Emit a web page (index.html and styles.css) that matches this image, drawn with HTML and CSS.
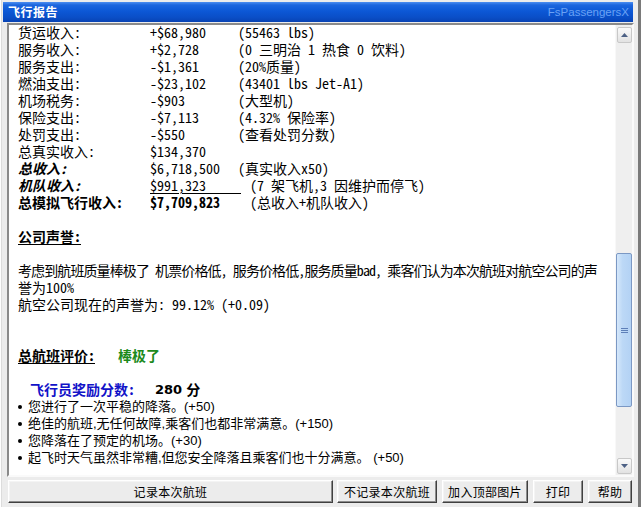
FILE: index.html
```html
<!DOCTYPE html>
<html lang="zh-CN">
<head>
<meta charset="utf-8">
<title>飞行报告</title>
<link rel="stylesheet" href="styles.css">
</head>
<body>
<div class="window">
  <div class="titlebar">
    <span class="title">飞行报告</span>
    <span class="brand">FsPassengersX</span>
  </div>
  <div class="panel">
    <div class="report">
      <div class="sheet">
        <div class="row"><span class="lbl">货运收入:</span><span class="val">+$68,980</span><span class="note">(55463 lbs)</span></div>
        <div class="row"><span class="lbl">服务收入:</span><span class="val">+$2,728</span><span class="note">(0 三明治 1 热食 0 饮料)</span></div>
        <div class="row"><span class="lbl">服务支出:</span><span class="val">-$1,361</span><span class="note">(20%质量)</span></div>
        <div class="row"><span class="lbl">燃油支出:</span><span class="val">-$23,102</span><span class="note">(43401 lbs Jet-A1)</span></div>
        <div class="row"><span class="lbl">机场税务:</span><span class="val">-$903</span><span class="note">(大型机)</span></div>
        <div class="row"><span class="lbl">保险支出:</span><span class="val">-$7,113</span><span class="note">(4.32% 保险率)</span></div>
        <div class="row"><span class="lbl">处罚支出:</span><span class="val">-$550</span><span class="note">(查看处罚分数)</span></div>
        <div class="row"><span class="lbl">总真实收入:</span><span class="val">$134,370</span></div>
        <div class="row"><span class="lbl em">总收入:</span><span class="val">$6,718,500</span><span class="note">(真实收入x50)</span></div>
        <div class="row"><span class="lbl em">机队收入:</span><span class="val wide"><span class="ul">$991,323&nbsp;&nbsp;&nbsp;&nbsp;&nbsp;</span></span><span class="note">(7 架飞机,3 因维护而停飞)</span></div>
        <div class="row"><span class="lbl strong">总模拟飞行收入:</span><span class="val wide strong">$7,709,823</span><span class="note">(总收入+机队收入)</span></div>
        <div class="blank"></div>
        <div class="line"><span class="heading">公司声誉:</span></div>
        <div class="blank"></div>
        <div class="line tight">考虑到航班质量棒极了 机票价格低, 服务价格低,服务质量bad, 乘客们认为本次航班对航空公司的声</div>
        <div class="line">誉为100%</div>
        <div class="line">航空公司现在的声誉为: 99.12% (+0.09)</div>
        <div class="blank"></div>
        <div class="blank"></div>
        <div class="line"><span class="heading rate-lbl">总航班评价:</span><span class="rating">棒极了</span></div>
        <div class="blank"></div>
        <div class="line bonus"><span class="bonus-lbl">飞行员奖励分数:</span><span class="score">280</span><span class="score-unit">分</span></div>
        <ul class="bullets">
          <li>您进行了一次平稳的降落。(+50)</li>
          <li>绝佳的航班,无任何故障,乘客们也都非常满意。(+150)</li>
          <li>您降落在了预定的机场。(+30)</li>
          <li>起飞时天气虽然非常糟,但您安全降落且乘客们也十分满意。 (+50)</li>
        </ul>
      </div>
    </div>
    <div class="scrollbar">
      <div class="sb-btn">
        <svg width="7" height="4" viewBox="0 0 7 4"><path d="M0 4 L3.5 0 L7 4 Z" fill="#4d6185"/></svg>
      </div>
      <div class="sb-thumb">
        <svg width="7" height="7" viewBox="0 0 7 7"><path d="M0 1.5 H7 M0 3.5 H7 M0 5.5 H7" stroke="#5d7fb8" stroke-width="1"/></svg>
      </div>
      <div class="sb-fill"></div>
      <div class="sb-btn">
        <svg width="7" height="4" viewBox="0 0 7 4"><path d="M0 0 L3.5 4 L7 0 Z" fill="#4d6185"/></svg>
      </div>
    </div>
  </div>
  <div class="buttons">
    <button class="btn b1">记录本次航班</button>
    <button class="btn b2">不记录本次航班</button>
    <button class="btn b3">加入顶部图片</button>
    <button class="btn b4">打印</button>
    <button class="btn b5">帮助</button>
  </div>
</div>
</body>
</html>
```
FILE: styles.css
```css
html, body {
  margin: 0;
  padding: 0;
}
body {
  background: #ececec;
  font-family: "Noto Sans Mono CJK SC", "Noto Sans CJK SC", sans-serif;
}
.window {
  width: 641px;
  height: 507px;
  box-sizing: border-box;
  background: #ececec;
  border-right: 3px solid #7a7a7a;
  box-shadow: inset 1px 0 0 #ffffff, inset 2px 0 0 #dcdcdc;
  display: flex;
  flex-direction: column;
  align-items: flex-start;
  padding-top: 2px;
  overflow: hidden;
}
.titlebar {
  margin-left: 3px;
  width: 630px;
  height: 20px;
  box-sizing: border-box;
  display: flex;
  align-items: center;
  justify-content: space-between;
  padding: 0 4px 0 5px;
  background: linear-gradient(#4c8ef0 0, #1c66de 3px, #0c58d6 9px, #0a4fc8 15px, #0843b4 20px);
}
.title {
  color: #ffffff;
  font-family: "Noto Sans CJK SC", sans-serif;
  font-weight: bold;
  font-size: 12px;
  letter-spacing: 0.5px;
  line-height: 20px;
}
.brand {
  color: #6aa2f4;
  font-family: "Liberation Sans", Arial, sans-serif;
  font-size: 11.5px;
  line-height: 20px;
}
.panel {
  margin-top: 1px;
  margin-left: 7px;
  width: 627px;
  height: 454px;
  box-sizing: border-box;
  border-style: solid;
  border-width: 2px;
  border-color: #8a8a8a #fafafa #fafafa #8a8a8a;
  box-shadow: inset 1px 1px 0 #404040;
  display: flex;
  background: #ffffff;
}
.report {
  flex: 1;
  overflow: hidden;
  background: #ffffff;
  padding-left: 1px;
  padding-top: 1px;
}
.sheet {
  margin-top: -2px;
  padding-left: 8px;
  font-size: 14px;
  line-height: 17px;
  color: #000000;
  white-space: nowrap;
}
.row, .line {
  height: 17px;
  display: flex;
  align-items: center;
}
.tight {
  letter-spacing: -0.9px;
}
.blank {
  height: 17px;
}
.lbl {
  width: 132px;
  flex: none;
}
.val {
  width: 88px;
  flex: none;
}
.val.wide {
  width: 100px;
}
.em {
  font-weight: bold;
  font-style: italic;
}
.strong {
  font-weight: bold;
}
.ul {
  text-decoration: underline;
  text-underline-offset: 2px;
}
.heading {
  font-weight: bold;
  text-decoration: underline;
  text-underline-offset: 2px;
}
.rate-lbl {
  width: 100px;
  flex: none;
}
.rating {
  color: #1b8a1b;
  font-weight: bold;
}
.bonus {
  padding-left: 12px;
}
.bonus-lbl {
  color: #1212c8;
  font-weight: bold;
  width: 125px;
  flex: none;
}
.score {
  font-family: "DejaVu Sans", sans-serif;
  font-weight: bold;
  font-size: 13px;
  margin-right: 4px;
}
.score-unit {
  font-weight: bold;
}
.bullets {
  list-style: none;
  margin: 0;
  padding: 0;
  font-family: "Liberation Sans", "Noto Sans CJK SC", sans-serif;
  font-size: 13px;
}
.bullets li {
  height: 17px;
  line-height: 17px;
  position: relative;
  padding-left: 10px;
}
.bullets li::before {
  content: "";
  position: absolute;
  left: 0;
  top: 7px;
  width: 4px;
  height: 4px;
  border-radius: 50%;
  background: #000000;
}
.scrollbar {
  width: 17px;
  flex: none;
  box-sizing: border-box;
  background: #efefef;
  border-left: 1px solid #f8f8f8;
  display: flex;
  flex-direction: column;
  align-items: center;
  padding: 2px 0 1px;
}
.sb-btn {
  width: 15px;
  height: 16px;
  box-sizing: border-box;
  border: 1px solid #c8c8c8;
  border-radius: 2px;
  background: linear-gradient(#fafafa, #e2e2e2);
  display: flex;
  align-items: center;
  justify-content: center;
  flex: none;
}
.sb-thumb {
  margin-top: 210px;
  width: 16px;
  height: 154px;
  box-sizing: border-box;
  border: 1px solid #7b98c4;
  border-radius: 2px;
  background: linear-gradient(to right, #d6e8fb, #bcd8f6 40%, #b3d2f4);
  display: flex;
  align-items: center;
  justify-content: center;
  flex: none;
}
.sb-fill {
  flex: 1;
}
.buttons {
  margin-top: 3px;
  margin-left: 8px;
  display: flex;
  gap: 5px;
}
.btn {
  height: 23px;
  box-sizing: border-box;
  margin: 0;
  padding: 0;
  font-family: "Noto Sans CJK SC", sans-serif;
  font-size: 12px;
  letter-spacing: 0.3px;
  line-height: 19px;
  color: #000000;
  background: #ececec;
  border-style: solid;
  border-width: 1px;
  border-color: #ffffff #404040 #404040 #ffffff;
  box-shadow: inset -1px -1px 0 #8c8c8c, inset 1px 1px 0 #f4f4f4;
}
.b1 { width: 325px; margin-right: -1px; }
.b2 { width: 100px; }
.b3 { width: 86px; }
.b4 { width: 50px; }
.b5 { width: 44px; }
```
